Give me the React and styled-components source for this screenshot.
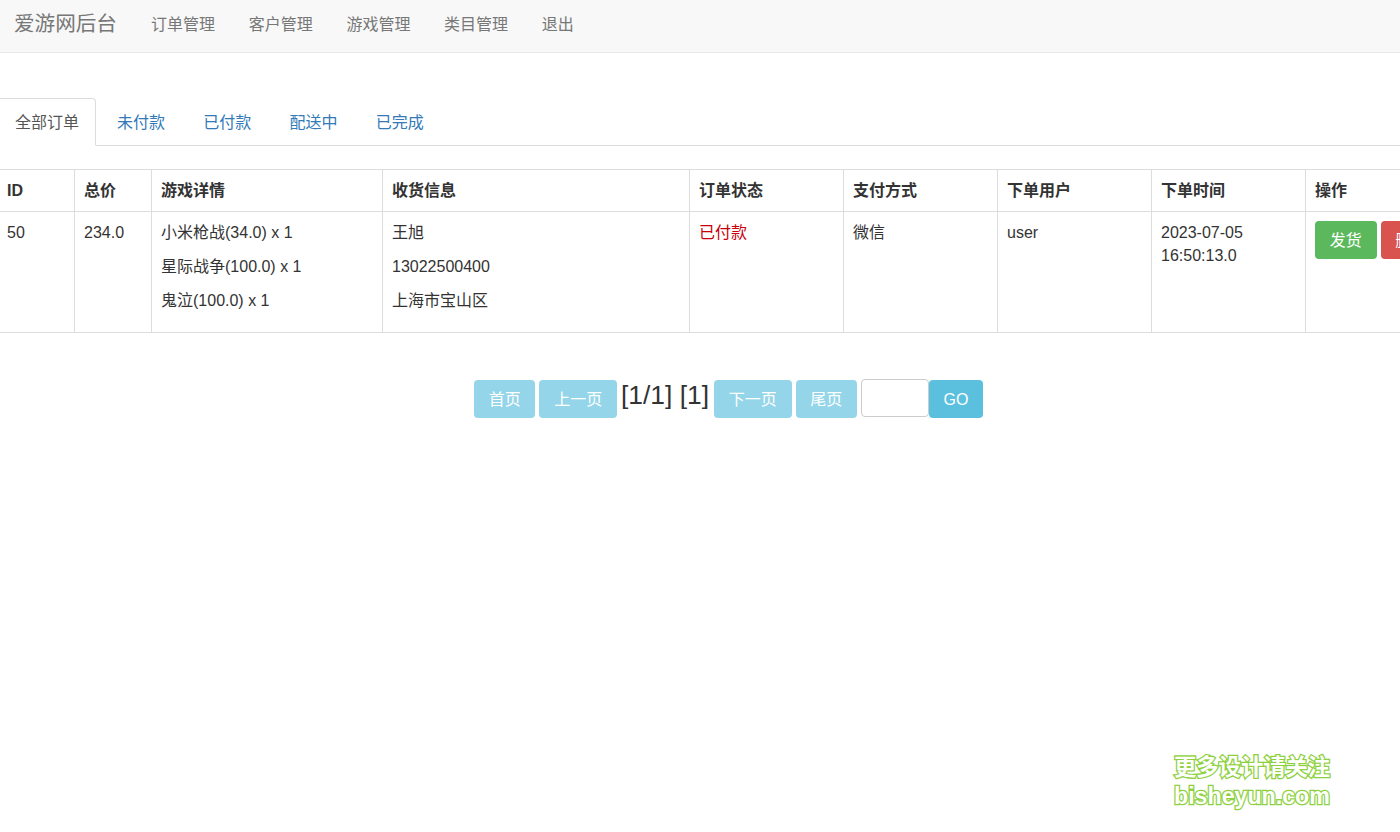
import React from 'react';
import styled, { createGlobalStyle } from 'styled-components';

const orders = [
  {
    id: 50,
    total: '234.0',
    games: ['小米枪战(34.0) x 1', '星际战争(100.0) x 1', '鬼泣(100.0) x 1'],
    address: ['王旭', '13022500400', '上海市宝山区'],
    status: '已付款',
    payment: '微信',
    user: 'user',
    time: '2023-07-05 16:50:13.0',
  },
];

const navItems = ['订单管理', '客户管理', '游戏管理', '类目管理', '退出'];
const tabs = ['全部订单', '未付款', '已付款', '配送中', '已完成'];
const columns = [
  { title: 'ID', width: 77 },
  { title: '总价', width: 77 },
  { title: '游戏详情', width: 231 },
  { title: '收货信息', width: 307 },
  { title: '订单状态', width: 154 },
  { title: '支付方式', width: 154 },
  { title: '下单用户', width: 154 },
  { title: '下单时间', width: 154 },
  { title: '操作', width: 153 },
];

const App = () => (
  <>
    <GlobalStyle />
    <Navbar>
      <Brand>爱游网后台</Brand>
      <NavList>
        {navItems.map(item => (
          <NavLink key={item}>{item}</NavLink>
        ))}
      </NavList>
    </Navbar>

    <Content>
      <Tabs>
        {tabs.map((tab, i) => (
          <Tab key={tab} $active={i === 0}>{tab}</Tab>
        ))}
      </Tabs>

      <OrderTable>
        <colgroup>
          {columns.map(col => (
            <col key={col.title} width={col.width} />
          ))}
        </colgroup>
        <thead>
          <tr>
            {columns.map(col => (
              <Th key={col.title}>{col.title}</Th>
            ))}
          </tr>
        </thead>
        <tbody>
          {orders.map(order => (
            <tr key={order.id}>
              <Td>{order.id}</Td>
              <Td>{order.total}</Td>
              <Td>
                {order.games.map(game => (
                  <Line key={game}>{game}</Line>
                ))}
              </Td>
              <Td>
                {order.address.map(line => (
                  <Line key={line}>{line}</Line>
                ))}
              </Td>
              <Td><Status>{order.status}</Status></Td>
              <Td>{order.payment}</Td>
              <Td>{order.user}</Td>
              <Td>{order.time}</Td>
              <ActionCell>
                <Button $color="#5cb85c">发货</Button>
                <Button $color="#d9534f">删除</Button>
              </ActionCell>
            </tr>
          ))}
        </tbody>
      </OrderTable>

      <Pager>
        <Button $color="#5bc0de" $faded>首页</Button>
        <Button $color="#5bc0de" $faded>上一页</Button>
        <PageInfo>[1/1] [1]</PageInfo>
        <Button $color="#5bc0de" $faded>下一页</Button>
        <Button $color="#5bc0de" $faded>尾页</Button>
        <JumpGroup>
          <PageInput />
          <GoButton $color="#5bc0de">GO</GoButton>
        </JumpGroup>
      </Pager>
    </Content>

    <Watermark>
      <WatermarkLine $size={22.3}>更多设计请关注</WatermarkLine>
      <WatermarkLine $size={23.2}>bisheyun.com</WatermarkLine>
    </Watermark>
  </>
);

const GlobalStyle = createGlobalStyle`
  html, body {
    margin: 0;
    height: 100%;
    overflow: hidden;
    background: #fff;
  }
  body {
    font-family: "Liberation Sans", "Noto Sans CJK SC", sans-serif;
    font-size: 16px;
    line-height: 1.42857;
    color: #333;
  }
`;

const Navbar = styled.div`
  display: flex;
  align-items: center;
  height: 53px;
  padding-left: 14px;
  padding-bottom: 3px;
  box-sizing: border-box;
  margin-bottom: 45px;
  background: #f8f8f8;
  border-bottom: 1px solid #e7e7e7;
  color: #777;
`;

const Brand = styled.div`
  font-size: 20.6px;
  margin-right: 34px;
  margin-bottom: 1px;
`;

const NavList = styled.div`
  display: flex;
  gap: 33.7px;
  margin-top: 1px;
`;

const NavLink = styled.a`
  color: #777;
`;

const Content = styled.div`
  width: 1461px;
  margin-left: -3px;
`;

const Tabs = styled.div`
  display: flex;
  height: 48px;
  margin-bottom: 23px;
  box-sizing: border-box;
  border-bottom: 1px solid #ddd;
`;

const Tab = styled.a`
  box-sizing: border-box;
  height: 48px;
  margin-right: ${p => (p.$active ? '3px' : '2.25px')};
  padding: 13px ${p => (p.$active ? '16px' : '17px')} 11px 17px;
  border: 1px solid ${p => (p.$active ? '#ddd' : 'transparent')};
  border-bottom-color: ${p => (p.$active ? '#fff' : 'transparent')};
  border-radius: 4px 4px 0 0;
  background: ${p => (p.$active ? '#fff' : 'transparent')};
  color: ${p => (p.$active ? '#555' : '#337ab7')};
`;

const OrderTable = styled.table`
  width: 1461px;
  table-layout: fixed;
  border-collapse: collapse;
  border-spacing: 0;
  margin-bottom: 47px;
`;

const Th = styled.th`
  height: 42px;
  box-sizing: border-box;
  padding: 10px 9px 8px 9px;
  border: 1px solid #ddd;
  text-align: left;
  font-weight: bold;
  color: #333;
`;

const Td = styled.td`
  height: 120px;
  box-sizing: border-box;
  padding: 10px 9px 7px 9px;
  border: 1px solid #ddd;
  vertical-align: top;
`;

const ActionCell = styled(Td)`
  padding-top: 9px;
  white-space: nowrap;
`;

const Line = styled.p`
  margin: 0 0 11.4px;
`;

const Status = styled.span`
  color: #c7000b;
`;

const Button = styled.button`
  display: inline-block;
  height: 38px;
  padding: 3px 13.75px 0;
  margin-right: 4px;
  border: 1px solid transparent;
  border-radius: 4px;
  background: ${p => p.$color};
  opacity: ${p => (p.$faded ? 0.65 : 1)};
  color: #fff;
  font: inherit;
`;

const Pager = styled.div`
  display: flex;
  justify-content: center;
  align-items: flex-start;
  height: 40px;
  padding-left: 2px;
`;

const PageInfo = styled.span`
  font-size: 26.4px;
  line-height: 30px;
  margin-right: 5px;
`;

const JumpGroup = styled.div`
  display: flex;
  align-items: flex-start;
  margin-top: -1px;
`;

const PageInput = styled.input`
  width: 68px;
  height: 38px;
  box-sizing: border-box;
  border: 1px solid #ccc;
  border-radius: 4px;
  background: #fff;
`;

const GoButton = styled(Button)`
  width: 54px;
  padding: 3px 0 0;
  margin: 1px 0 0;
`;

const Watermark = styled.div`
  position: absolute;
  left: 1174px;
  top: 754px;
  display: flex;
  flex-direction: column;
  color: #fff;
  -webkit-text-stroke: 2.6px #8ed13f;
  paint-order: stroke fill;
  white-space: nowrap;
`;

const WatermarkLine = styled.span`
  font-weight: bold;
  font-size: ${p => p.$size}px;
  line-height: 28px;
`;

export default App;
